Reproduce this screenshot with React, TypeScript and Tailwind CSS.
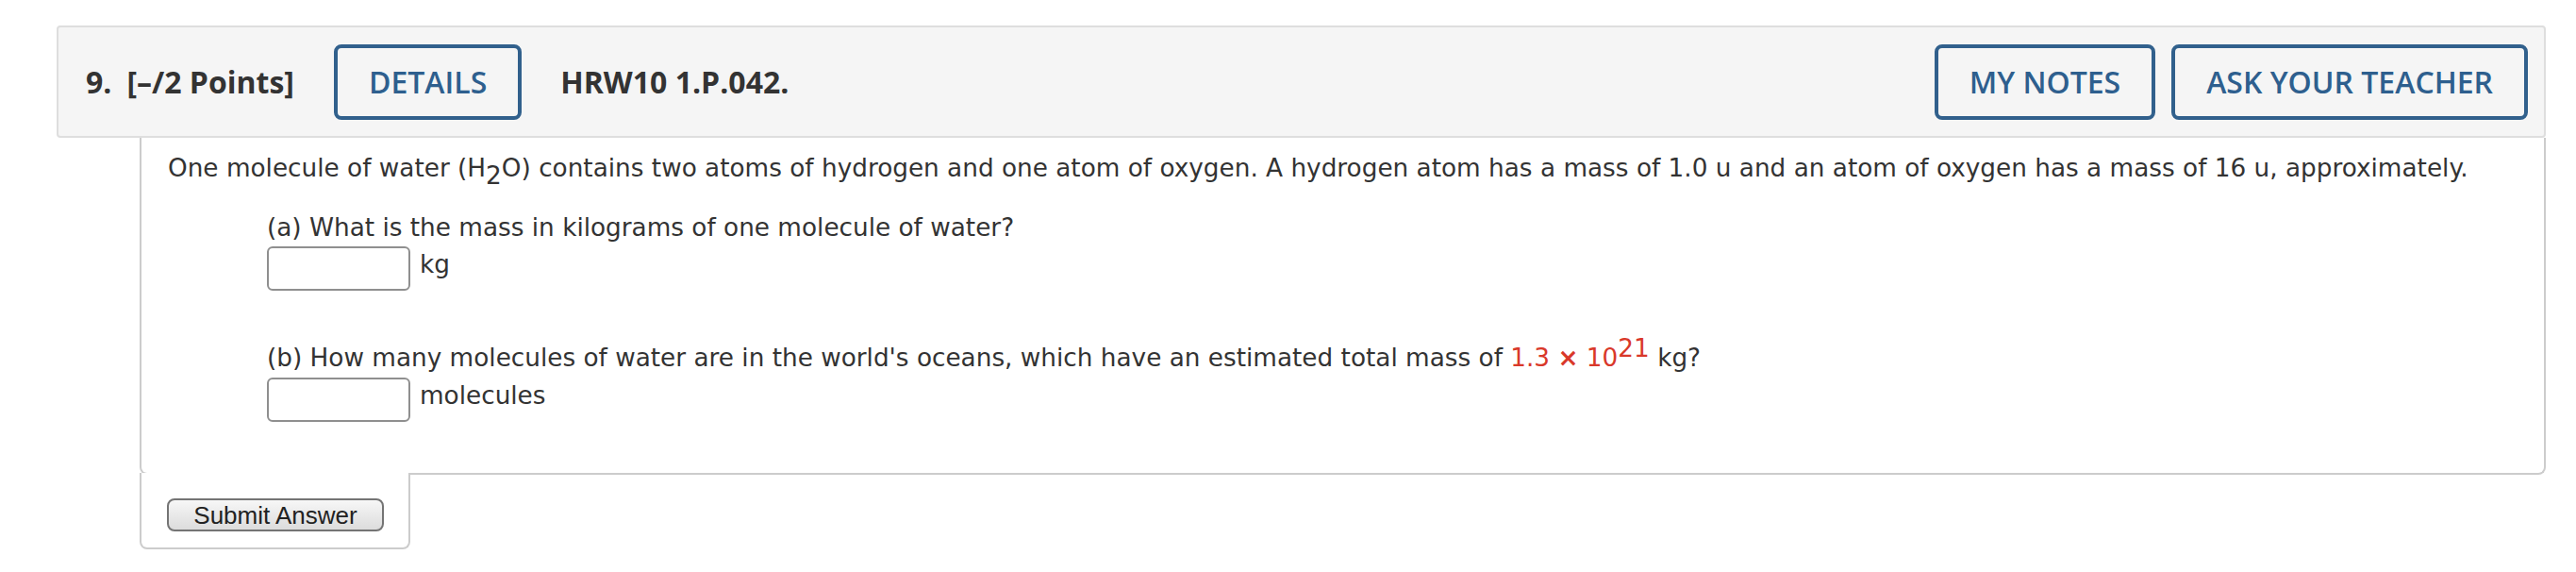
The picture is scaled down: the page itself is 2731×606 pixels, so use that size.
import React from 'react'

function OutlineButton({ label }: { label: string }) {
  return (
    <button
      className="flex h-[80px] items-center rounded-[8px] border-4 border-[#31608c] bg-transparent px-[33px] text-[32px] font-semibold text-[#2e5f8e]"
      type="button"
    >
      {label}
    </button>
  )
}

function AnswerBox({ unit }: { unit: string }) {
  return (
    <div className="flex items-start gap-[10px]">
      <div className="h-[47px] w-[152px] rounded-[6px] border-2 border-[#8f8f8f] bg-white" />
      <span>{unit}</span>
    </div>
  )
}

export default function App() {
  return (
    <div className="min-h-screen bg-white pl-[60px] pr-[32px] pt-[27px]">
      <div className="flex h-[119px] items-center rounded-[4px] border-2 border-[#dedede] bg-[#f5f5f5] pl-[29px] pr-[17px] font-['Open_Sans',sans-serif] text-[32px] text-[#333]">
        <span className="font-bold">9.</span>
        <span className="ml-[16px] font-bold">[–/2 Points]</span>
        <div className="ml-[42px]">
          <OutlineButton label="DETAILS" />
        </div>
        <span className="ml-[41px] font-bold">HRW10 1.P.042.</span>
        <div className="ml-auto flex gap-[17px]">
          <OutlineButton label="MY NOTES" />
          <OutlineButton label="ASK YOUR TEACHER" />
        </div>
      </div>

      <div className="ml-[88px]">
        <div className="rounded-b-[8px] border-2 border-t-0 border-[#cccccc] pb-[54px] pl-[28px] pt-[13px] font-['DejaVu_Sans',Verdana,sans-serif] text-[26.3px] leading-[38px] text-[#333]">
          <p>
            One molecule of water (H<span className="relative top-[8px]">2</span>O) contains two atoms of hydrogen and
            one atom of oxygen. A hydrogen atom has a mass of 1.0 u and an atom of oxygen has a mass of 16 u,
            approximately.
          </p>
          <div className="mt-[25px] pl-[105px]">
            <p>(a) What is the mass in kilograms of one molecule of water?</p>
            <div className="mt-[1px]">
              <AnswerBox unit="kg" />
            </div>
            <p className="mt-[52px]">
              (b) How many molecules of water are in the world's oceans, which have an estimated total mass of{' '}
              <span className="text-[#d9382a]">
                1.3 <span className="font-bold">×</span> 10<span className="relative -top-[10px]">21</span>
              </span>{' '}
              kg?
            </p>
            <div className="mt-[2px]">
              <AnswerBox unit="molecules" />
            </div>
          </div>
        </div>
        <div className="relative -mt-[2px] w-[287px] rounded-b-[8px] border-2 border-t-0 border-[#cccccc] bg-white pb-[17px] pl-[27px] pt-[27px]">
          <button
            className="h-[35px] w-[230px] rounded-[8px] border-2 border-[#747474] bg-gradient-to-b from-[#f7f7f7] to-[#dcdcdc] font-['Liberation_Sans',Arial,sans-serif] text-[26px] leading-none text-[#222]"
            type="button"
          >
            Submit Answer
          </button>
        </div>
      </div>
    </div>
  )
}
